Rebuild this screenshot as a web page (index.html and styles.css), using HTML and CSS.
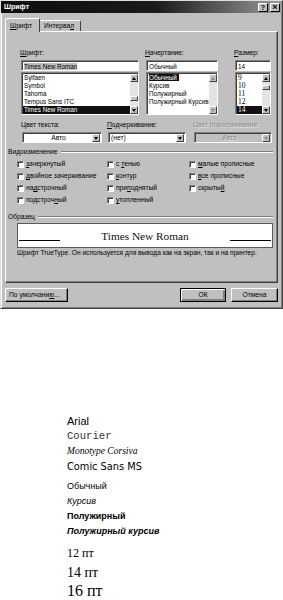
FILE: index.html
```html
<!DOCTYPE html>
<html lang="ru">
<head>
    <meta charset="UTF-8">
    <title>Шрифт</title>
    <link rel="stylesheet" href="styles.css">
</head>
<body>
    <div class="dialog">
        <div class="titlebar">
            <span class="title">Шрифт</span>
            <span class="tbtn">?</span>
            <span class="tbtn close">×</span>
        </div>
        <div class="tabs">
            <span class="tab active"><u>Ш</u>рифт</span>
            <span class="tab">Интерва<u>л</u></span>
        </div>
        <div class="panel">
            <div class="row top-row">
                <div class="field col-font">
                    <div class="label"><u>Ш</u>рифт:</div>
                    <div class="input"><span class="mark">Times New Roman</span></div>
                    <div class="list">
                        <div class="items">
                            <div>Sylfaen</div>
                            <div>Symbol</div>
                            <div>Tahoma</div>
                            <div>Tempus Sans ITC</div>
                            <div class="on">Times New Roman</div>
                        </div>
                        <div class="scroll">
                            <span class="sbtn up"></span>
                            <span class="track"><span class="thumb low"></span></span>
                            <span class="sbtn down"></span>
                        </div>
                    </div>
                </div>
                <div class="field col-style">
                    <div class="label"><u>Н</u>ачертание:</div>
                    <div class="input">Обычный</div>
                    <div class="list">
                        <div class="items">
                            <div><span class="on">Обычный</span></div>
                            <div>Курсив</div>
                            <div>Полужирный</div>
                            <div>Полужирный Курсив</div>
                        </div>
                        <div class="scroll">
                            <span class="sbtn up off"></span>
                            <span class="track"></span>
                            <span class="sbtn down off"></span>
                        </div>
                    </div>
                </div>
                <div class="field col-size">
                    <div class="label"><u>Р</u>азмер:</div>
                    <div class="input">14</div>
                    <div class="list">
                        <div class="items serif">
                            <div>9</div>
                            <div>10</div>
                            <div>11</div>
                            <div>12</div>
                            <div class="on">14</div>
                        </div>
                        <div class="scroll">
                            <span class="sbtn up"></span>
                            <span class="track"><span class="thumb high"></span></span>
                            <span class="sbtn down"></span>
                        </div>
                    </div>
                </div>
            </div>

            <div class="row combo-row">
                <div class="field col-color">
                    <div class="label">Цвет текста:</div>
                    <div class="combo"><span class="value center">Авто</span><span class="sbtn down"></span></div>
                </div>
                <div class="field col-under">
                    <div class="label"><u>П</u>одчеркивание:</div>
                    <div class="combo"><span class="value">(нет)</span><span class="sbtn down"></span></div>
                </div>
                <div class="field col-ucolor disabled">
                    <div class="label">Цвет подчеркивания:</div>
                    <div class="combo"><span class="value center">Авто</span><span class="sbtn down off"></span></div>
                </div>
            </div>

            <div class="group">Видоизменение</div>
            <div class="checks">
                <label class="check"><span class="box"></span><span><u>з</u>ачеркнутый</span></label>
                <label class="check"><span class="box"></span><span>с <u>т</u>енью</span></label>
                <label class="check"><span class="box"></span><span><u>м</u>алые прописные</span></label>
                <label class="check"><span class="box"></span><span><u>д</u>войное зачеркивание</span></label>
                <label class="check"><span class="box"></span><span><u>к</u>онтур</span></label>
                <label class="check"><span class="box"></span><span><u>в</u>се прописные</span></label>
                <label class="check"><span class="box"></span><span>на<u>д</u>строчный</span></label>
                <label class="check"><span class="box"></span><span>при<u>п</u>однятый</span></label>
                <label class="check"><span class="box"></span><span>скрыты<u>й</u></span></label>
                <label class="check"><span class="box"></span><span>подстроч<u>н</u>ый</span></label>
                <label class="check"><span class="box"></span><span><u>у</u>топленный</span></label>
            </div>

            <div class="group sample-head">Образец</div>
            <div class="sample">
                <span class="rule"></span>
                <span class="sample-text">Times New Roman</span>
                <span class="rule"></span>
            </div>
            <div class="note">Шрифт TrueType. Он используется для вывода как на экран, так и на принтер.</div>
        </div>
        <div class="buttons">
            <span class="btn wide">По умолчани<u>ю</u>...</span>
            <span class="spacer"></span>
            <span class="btn default">ОК</span>
            <span class="btn">Отмена</span>
        </div>
    </div>

    <div class="samples">
        <div class="sgroup fonts">
            <div class="arial">Arial</div>
            <div class="courier">Courier</div>
            <div class="corsiva">Monotype Corsiva</div>
            <div class="comic">Comic Sans MS</div>
        </div>
        <div class="sgroup styles">
            <div>Обычный</div>
            <div class="it">Курсив</div>
            <div class="bd">Полужирный</div>
            <div class="bd it">Полужирный курсив</div>
        </div>
        <div class="sgroup sizes">
            <div class="s12">12 пт</div>
            <div class="s14">14 пт</div>
            <div class="s16">16 пт</div>
        </div>
    </div>
</body>
</html>
```

FILE: styles.css
```css
body {
    margin: 0;
    background: #fff;
    font-family: "Liberation Sans", Arial, sans-serif;
    color: #000;
}
u {
    text-decoration-thickness: 1px;
}

/* dialog frame */
.dialog {
    width: 283px;
    height: 309px;
    box-sizing: border-box;
    background: #c0c0c0;
    border: 1px solid;
    border-color: #dfdfdf #404040 #404040 #dfdfdf;
    box-shadow: inset 1px 1px #fff, inset -1px -1px #808080;
    font-size: 6.7px;
    line-height: 8px;
}
.titlebar {
    height: 12px;
    display: flex;
    align-items: center;
    gap: 2px;
    padding: 0 2px 0 3px;
    background: linear-gradient(to right, #0c0c0c 0%, #1a1a1a 55%, #9a9a9a 100%);
}
.title {
    flex: 1;
    color: #fff;
    font-weight: bold;
    font-size: 7px;
}
.tbtn {
    width: 10px;
    height: 9px;
    box-sizing: border-box;
    background: #c0c0c0;
    border: 1px solid;
    border-color: #fff #000 #000 #fff;
    font-size: 7px;
    line-height: 7px;
    text-align: center;
    font-weight: bold;
}
.tbtn.close {
    font-size: 9px;
}

/* tabs */
.tabs {
    display: flex;
    align-items: flex-end;
    margin: 5px 0 -1px 4px;
    position: relative;
    z-index: 1;
}
.tab {
    height: 11px;
    box-sizing: border-box;
    margin-bottom: 1px;
    padding: 0 4px;
    border: 1px solid;
    border-bottom: 0;
    border-color: #fff #404040 #fff #fff;
    border-radius: 2px 2px 0 0;
    background: #c0c0c0;
    line-height: 10px;
}
.tab.active {
    width: 35px;
    height: 14px;
    margin-bottom: 0;
    padding: 2px 0 0 4px;
}
.tab + .tab {
    border-left: 0;
    width: 41px;
}

/* main panel */
.panel {
    height: 252px;
    box-sizing: border-box;
    margin: 0 4px;
    padding: 17px 4px 0 1px;
    border: 1px solid;
    border-color: #fff #404040 #404040 #fff;
    box-shadow: inset -1px -1px #808080;
}
.row {
    display: flex;
    padding-left: 14px;
}
.field {
    display: flex;
    flex-direction: column;
}
.label {
    height: 8px;
    margin-bottom: 3px;
}
.top-row .label {
    margin-left: -1px;
}
.col-font { width: 118px; }
.col-style { width: 72px; margin-left: 7px; }
.col-size { width: 36px; margin-left: 17px; }

.input,
.list,
.combo {
    box-sizing: border-box;
    background: #fff;
    border: 1px solid;
    border-color: #808080 #fff #fff #808080;
    box-shadow: inset 1px 1px #404040;
}
.input {
    height: 11px;
    padding: 1px 2px 0;
    line-height: 9px;
    font-size: 6.3px;
}
.mark {
    background: #bdbdbd;
}
.list {
    height: 43px;
    margin-top: 1px;
    display: flex;
    padding: 1px 0 0 1px;
}
.items {
    flex: 1;
    font-size: 6.3px;
    line-height: 8px;
}
.items > div {
    padding-left: 1px;
    white-space: nowrap;
}
.items .on {
    background: #111;
    color: #fff;
}
.items span.on {
    padding-right: 2px;
}
.items.serif {
    font-family: "Liberation Serif", "Times New Roman", serif;
    font-size: 7.5px;
}
.scroll {
    width: 8px;
    display: flex;
    flex-direction: column;
    background: #e3e3e3;
}
.track {
    flex: 1;
    display: flex;
    flex-direction: column;
}
.thumb {
    height: 5px;
    background: #c0c0c0;
    border: 1px solid;
    border-color: #fff #404040 #404040 #fff;
    box-sizing: border-box;
}
.thumb.low { margin-top: auto; margin-bottom: 5px; }
.thumb.high { margin-top: 3px; }
.sbtn {
    width: 8px;
    height: 8px;
    box-sizing: border-box;
    background: #c0c0c0;
    border: 1px solid;
    border-color: #fff #404040 #404040 #fff;
    display: flex;
    align-items: center;
    justify-content: center;
}
.sbtn::after {
    content: "";
    width: 0;
    height: 0;
    border-left: 2.5px solid transparent;
    border-right: 2.5px solid transparent;
}
.sbtn.up::after { border-bottom: 3px solid #000; }
.sbtn.down::after { border-top: 3px solid #000; }
.sbtn.off.up::after { border-bottom-color: #8a8a8a; }
.sbtn.off.down::after { border-top-color: #8a8a8a; }

/* second row */
.combo-row {
    margin-top: 6px;
}
.col-color { width: 80px; margin-left: 1px; }
.col-under { width: 78px; margin-left: 6px; }
.col-ucolor { width: 78px; margin-left: 8px; }
.combo-row .label { margin-left: -1px; }
.combo {
    height: 11px;
    display: flex;
    align-items: center;
    padding: 1px 1px 0 2px;
}
.combo .value { flex: 1; }
.combo .value.center { text-align: center; }
.disabled .label,
.disabled .value {
    color: #8a8a8a;
    text-shadow: 1px 1px #e8e8e8;
}
.disabled .combo {
    background: #c0c0c0;
}

/* groups */
.group {
    display: flex;
    align-items: center;
    gap: 3px;
    height: 8px;
    margin: 5px 0 0 1px;
}
.group::after {
    content: "";
    flex: 1;
    border-top: 1px solid #808080;
    border-bottom: 1px solid #fff;
}
.checks {
    display: grid;
    grid-template-columns: 90px 82px 1fr;
    grid-auto-rows: 12px;
    margin-top: 2px;
    padding-left: 10px;
}
.check {
    display: flex;
    align-items: center;
    gap: 2px;
    white-space: nowrap;
}
.box {
    width: 7px;
    height: 7px;
    box-sizing: border-box;
    background: #fff;
    border: 1px solid;
    border-color: #808080 #fff #fff #808080;
    box-shadow: inset 1px 1px #404040;
    flex: none;
}
.sample-head {
    margin-top: 7px;
}
.sample {
    height: 25px;
    box-sizing: border-box;
    margin: 2px 0 0 10px;
    background: #fff;
    border: 1px solid #5a5a5a;
    display: flex;
    align-items: center;
    padding: 0 1px;
}
.sample-text {
    flex: none;
    margin: 0 auto;
    font-family: "Liberation Serif", "Times New Roman", serif;
    font-size: 11.3px;
    line-height: 12px;
    color: #111;
}
.rule {
    width: 41px;
    height: 1px;
    margin-top: 9px;
    background: #000;
}
.note {
    height: 8px;
    margin: 1px 0 0 10px;
    font-size: 6.6px;
    white-space: nowrap;
}

/* buttons */
.buttons {
    display: flex;
    gap: 5px;
    margin: 5px 4px 0 4px;
}
.spacer { flex: 1; }
.btn {
    width: 47px;
    height: 14px;
    box-sizing: border-box;
    background: #c0c0c0;
    border: 1px solid;
    border-color: #fff #000 #000 #fff;
    box-shadow: inset -1px -1px #808080;
    text-align: center;
    line-height: 12px;
}
.btn.wide {
    width: 63px;
    text-align: left;
    padding-left: 3px;
}
.btn.default {
    width: 46px;
    border-color: #000;
    box-shadow: inset 1px 1px #fff, inset -2px -2px #808080;
}

/* font samples below */
.samples {
    padding-left: 67px;
    margin-top: 105px;
}
.sgroup div {
    white-space: nowrap;
}
.fonts div {
    height: 15px;
    line-height: 15px;
}
.arial { font-size: 11px; }
.courier {
    font-family: "Liberation Mono", "Courier New", monospace;
    font-size: 10.6px;
    color: #333;
}
.corsiva {
    font-family: "Liberation Serif", "Times New Roman", serif;
    font-style: italic;
    font-size: 9.5px;
}
.comic {
    font-family: "DejaVu Sans", sans-serif;
    font-size: 9.8px;
}
.styles {
    margin-top: 5px;
}
.styles div {
    height: 15px;
    line-height: 15px;
    font-size: 9px;
}
.it { font-style: italic; }
.bd { font-weight: bold; }
.sizes {
    margin-top: 4px;
    font-family: "Liberation Serif", "Times New Roman", serif;
}
.s12,
.s14 {
    height: 20px;
    line-height: 20px;
}
.s12 { font-size: 12px; }
.s14 { font-size: 14px; }
.s16 {
    font-size: 16px;
    height: 12px;
    line-height: 12px;
    margin-top: 2px;
}
```
